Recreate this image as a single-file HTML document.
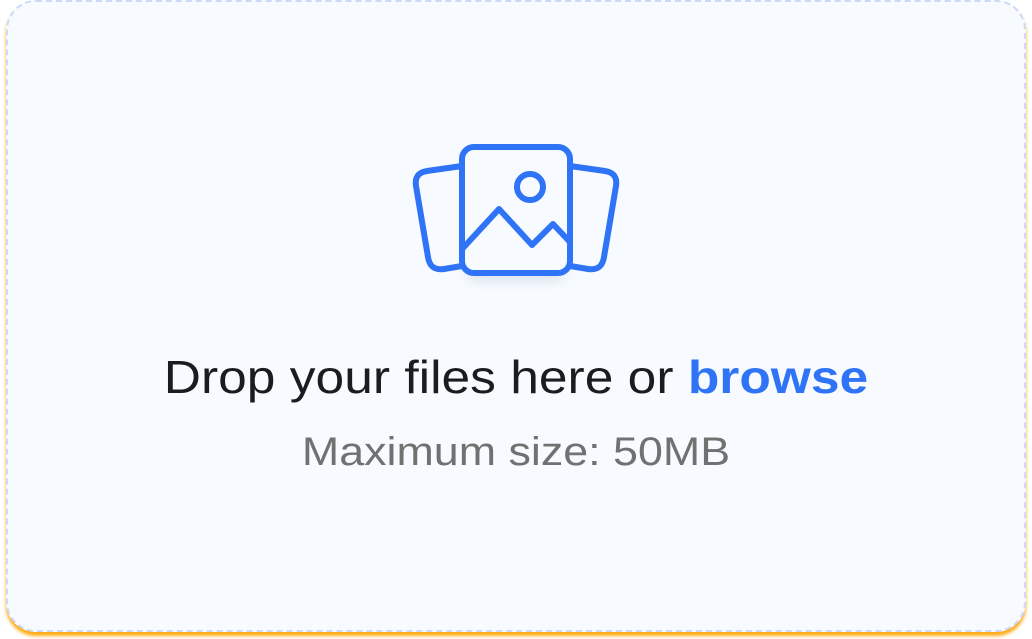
<!DOCTYPE html>
<html><head><style>
html,body{margin:0;padding:0;width:1032px;height:639px;background:#fff;overflow:hidden;font-family:"Liberation Sans",sans-serif}
.card{position:absolute;left:6px;top:0;width:1020px;height:632px;box-sizing:border-box;border:2.5px dashed #cdd9f8;border-radius:30px;background:#f7fbff;box-shadow:0 4px 3px rgba(255,168,10,.95)}
.t1{position:absolute;left:0;width:1032px;top:350px;text-align:center;font-size:46px;color:#1c1c1e;transform:scaleX(1.12);transform-origin:516px 0}
.t1 b{color:#2f74f6;font-weight:600}
.t2{position:absolute;left:0;width:1032px;top:430px;text-align:center;font-size:40px;color:#717171;transform:scaleX(1.12);transform-origin:516px 0}
</style></head><body>
<div class="card"></div>
<svg style="position:absolute;left:0;top:0" width="1032" height="639">
<defs><filter id="s" x="-50%" y="-50%" width="200%" height="200%"><feGaussianBlur stdDeviation="5"/></filter></defs>
<rect x="466" y="160" width="100" height="122" rx="12" fill="#c8d0e0" opacity=".5" filter="url(#s)"/>
<g fill="none" stroke="#2f74f6" stroke-width="6" stroke-linejoin="round" stroke-linecap="round">
<path d="M462,166 L427,171 Q414,173 416,186 L428,257 Q430,271 444,269 L462,266"/>
<path d="M570,166 L605,171 Q618,173 616,186 L604,257 Q602,271 588,269 L570,266"/>
<rect x="462" y="147" width="108" height="126" rx="12" fill="#f7fbff"/>
<circle cx="530" cy="187" r="13"/>
<path d="M463,248 L499,209 L532,245 L553,224 L569,241"/>
</g>
</svg>
<div class="t1">Drop your files here or <b>browse</b></div>
<div class="t2">Maximum size: 50MB</div>
</body></html>
